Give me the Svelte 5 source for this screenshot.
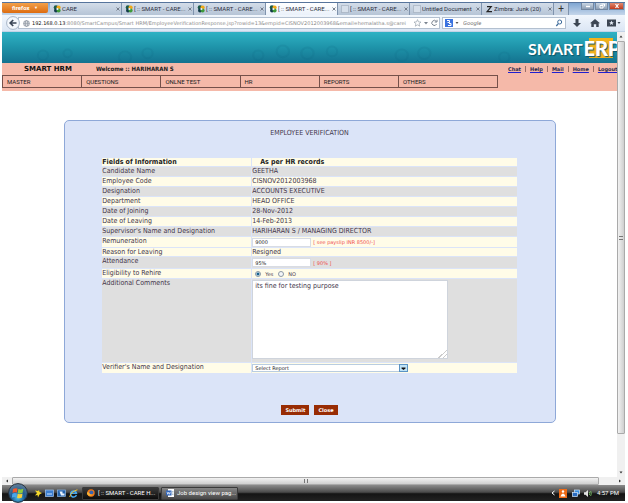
<script>
  const tabs = [
    { title: 'CARE', icon: 'care' },
    { title: '[ :: SMART - CARE...', icon: 'care' },
    { title: '[ :: SMART - CARE...', icon: 'care' },
    { title: '[ :: SMART - CARE...', icon: 'care', active: true },
    { title: '[ :: SMART - CARE...', icon: 'blank' },
    { title: 'Untitled Document', icon: 'blank' },
    { title: 'Zimbra: Junk (20)', icon: 'zimbra' }
  ];
  const menu = ['MASTER', 'QUESTIONS', 'ONLNE TEST', 'HR', 'REPORTS', 'OTHERS'];
  const links = ['Chat', 'Help', 'Mail', 'Home', 'Logout'];
  const records = [
    ['Candidate Name', 'GEETHA'],
    ['Employee Code', 'CISNOV2012003968'],
    ['Designation', 'ACCOUNTS EXECUTIVE'],
    ['Department', 'HEAD OFFICE'],
    ['Date of Joining', '28-Nov-2012'],
    ['Date of Leaving', '14-Feb-2013'],
    ["Supervisor's Name and Designation", 'HARIHARAN S / MANAGING DIRECTOR']
  ];
  let remuneration = $state('9000');
  let attendance = $state('95%');
  let rehire = $state('yes');
  let comments = $state('its fine for testing purpose');
</script>

<div class="screen">
  <header class="tabbar">
    <button class="firefox">firefox <span>▼</span></button>
    <div class="tabs">
      {#each tabs as tab}
        <div class="tab" class:active={tab.active}>
          {#if tab.icon === 'care'}
            <svg width="8" height="8" viewBox="0 0 8 8">
              <circle cx="3" cy="2.6" r="2.3" fill="#1c5a49" />
              <circle cx="5.6" cy="2.6" r="2.1" fill="#f0a818" />
              <circle cx="3" cy="5.6" r="2" fill="#123a4a" />
              <circle cx="5.6" cy="5.4" r="2" fill="#3f9a3c" />
              <circle cx="4.4" cy="4" r="1.1" fill="#eef4fa" />
            </svg>
          {:else if tab.icon === 'blank'}
            <svg width="8" height="8" viewBox="0 0 8 8">
              <rect x=".5" y=".5" width="7" height="7" fill="#d6dfea" stroke="#94a0b0" stroke-dasharray="1 1" />
            </svg>
          {:else}
            <svg width="8" height="8" viewBox="0 0 8 8">
              <path d="M2 1h5.5L3.4 6H7v1.3H.8L5 2.3H2z" fill="#222" />
            </svg>
          {/if}
          <span class="title">{tab.title}</span>
          <button class="x" aria-label="Close tab"><svg width="4" height="4" viewBox="0 0 4 4"><path d="M.5 .5l3 3M3.500 .5l-3 3" stroke="currentColor" stroke-width=".9" /></svg></button>
        </div>
      {/each}
      <button class="plus" aria-label="New tab">+</button>
    </div>
    <div class="winctl">
      <button aria-label="Minimize"><svg width="8" height="6" viewBox="0 0 8 6"><path d="M2 3.5h4" stroke="#fff" stroke-width="1.4" /></svg></button>
      <button aria-label="Restore"><svg width="8" height="6" viewBox="0 0 8 6"><path d="M3.5 1h3v2.500M2 2.500h3v2.500H2z" fill="none" stroke="#fff" /></svg></button>
      <button class="quit" aria-label="Close"><svg width="8" height="6" viewBox="0 0 8 6"><path d="M2.500 1l3 4M5.500 1l-3 4" stroke="#fff" stroke-width="1.2" /></svg></button>
    </div>
  </header>

  <div class="toolbar">
    <button class="back" aria-label="Back">
      <svg width="14" height="14" viewBox="0 0 14 14">
        <circle cx="7" cy="7" r="6.4" fill="#f4f8fd" stroke="#a8b6c8" />
        <path d="M10.500 7H4.500M7.200 4L4.200 7l3 3" fill="none" stroke="#3b4656" stroke-width="1.700" />
      </svg>
    </button>
    <div class="address">
      <svg width="7" height="7" viewBox="0 0 8 8"><g fill="none" stroke="#8b949f" stroke-width=".8"><circle cx="4" cy="4" r="3.400" /><ellipse cx="4" cy="4" rx="1.500" ry="3.400" /><path d="M.6 4h6.800M1 2.300h6M1 5.700h6" /></g></svg>
      <span class="url"><b>192.168.0.13</b>:8080/SmartCampus/Smart HRM/EmployeeVerificationResponse.jsp?rowid=13&amp;empid=CISNOV2012003968&amp;email=hemalatha.s@carei</span>
      <svg width="26" height="8" viewBox="0 0 26 8">
        <path d="M4.500 .6l1 2.300 2.500.2-1.900 1.600.6 2.500-2.200-1.400-2.200 1.400.6-2.500L1 3.100l2.500-.2z" fill="#fff" stroke="#9aa3ad" stroke-width=".7" />
        <path d="M11 3h4l-2 2.500z" fill="#7b8490" />
        <path d="M23.300 2.400A2.500 2.500 0 1 0 23.600 5M24 .8V3h-2.300" fill="none" stroke="#7b8490" />
      </svg>
    </div>
    <label class="search">
      <svg width="8" height="8" viewBox="0 0 8 8"><rect width="8" height="8" fill="#3b73e0" /><path d="M2 1.500h2.500v2H2.500M4 4.500h2v2H3" fill="none" stroke="#fff" /></svg>
      <svg width="4" height="8" viewBox="0 0 4 8"><path d="M.5 3h3L2 5z" fill="#555" /></svg>
      <input placeholder="Google" aria-label="Search Google" />
      <svg width="8" height="8" viewBox="0 0 8 8"><circle cx="4.700" cy="3" r="2" fill="none" stroke="#3f6c9c" /><path d="M3.300 4.600L1.300 7" stroke="#3f6c9c" stroke-width="1.300" /></svg>
    </label>
    <svg class="tools" width="50" height="10" viewBox="0 0 50 10">
      <g fill="#3c4653">
        <path d="M4.500 1h3v4H10L6 9 2 5h2.500z" />
        <path d="M24 1l5 4.300h-1.300V9h-2.500V6.200h-2.400V9h-2.500V5.300H19z" />
        <path d="M36 1.500h9v7h-9zM40.500 2.600l-.7 1.600-1.700.1 1.300 1-.4 1.700 1.500-.9 1.500.9-.4-1.700 1.300-1-1.700-.1z" fill-rule="evenodd" />
        <path d="M46.500 4h3L48 6z" />
      </g>
    </svg>
  </div>

  <div class="viewport">
    <main class="page">
      <div class="banner">
        <svg width="100%" height="100%" preserveAspectRatio="none" viewBox="0 0 600 32">
          <g fill="none" stroke="#0c6580" stroke-opacity=".14" stroke-width="2">
            <circle cx="40" cy="24" r="5" /><circle cx="64" cy="22" r="4" /><circle cx="120" cy="26" r="6" /><circle cx="142" cy="22" r="5" />
            <circle cx="250" cy="24" r="5" /><circle cx="274" cy="20" r="6" /><circle cx="298" cy="22" r="6" /><circle cx="322" cy="20" r="5" /><circle cx="390" cy="24" r="6" /><circle cx="412" cy="22" r="6" /><circle cx="490" cy="26" r="5" />
          </g>
        </svg>
        <div class="logo"><span class="smart">SMART</span><span class="erp">ERP</span></div>
      </div>
      <div class="menuband">
        <div class="userline">
          <strong class="app">SMART HRM</strong>
          <strong class="welcome">Welcome :: HARIHARAN S</strong>
          <nav class="links">
            {#each links as link, i}
              {#if i > 0}<i></i>{/if}
              <a href="#{link.toLowerCase()}">{link}</a>
            {/each}
          </nav>
        </div>
        <nav class="menu">
          {#each menu as item}<a href="#{item.toLowerCase()}">{item}</a>{/each}
        </nav>
      </div>

      <form class="panel" onsubmit={(e) => e.preventDefault()}>
        <h1>EMPLOYEE VERIFICATION</h1>
        <table>
          <thead>
            <tr class="cream"><th>Fields of Information</th><th class="second">As per HR records</th></tr>
          </thead>
          <tbody>
            {#each records as [name, value], i}
              <tr class:cream={i % 2 === 1}><td>{name}</td><td>{value}</td></tr>
            {/each}
            <tr class="cream">
              <td><label for="remuneration">Remuneration</label></td>
              <td><div class="field"><input id="remuneration" type="text" bind:value={remuneration} /><span class="hint">[ see payslip INR 8500/-]</span></div></td>
            </tr>
            <tr class="cream short"><td>Reason for Leaving</td><td>Resigned</td></tr>
            <tr>
              <td><label for="attendance">Attendance</label></td>
              <td><div class="field tall"><input id="attendance" type="text" bind:value={attendance} /><span class="hint">[ 90% ]</span></div></td>
            </tr>
            <tr class="cream">
              <td>Eligibility to Rehire</td>
              <td>
                <div class="radios">
                  <label><input type="radio" name="rehire" value="yes" bind:group={rehire} />Yes</label>
                  <label><input type="radio" name="rehire" value="no" bind:group={rehire} />NO</label>
                </div>
              </td>
            </tr>
            <tr>
              <td><label for="comments">Additional Comments</label></td>
              <td><textarea id="comments" bind:value={comments}></textarea></td>
            </tr>
            <tr class="cream">
              <td><label for="verifier">Verifier's Name and Designation</label></td>
              <td>
                <div class="pick">
                  <select id="verifier"><option>Select Report</option></select>
                  <svg width="9" height="8" viewBox="0 0 9 8"><rect x=".5" y=".5" width="8" height="7" fill="#bfe3f6" stroke="#5a93c4" /><path d="M2.500 3.500h4v1L4.500 6l-2-1.500z" fill="#111" /></svg>
                </div>
              </td>
            </tr>
          </tbody>
        </table>
        <div class="actions">
          <button type="submit">Submit</button>
          <button type="button">Close</button>
        </div>
      </form>
    </main>
    <div class="vscroll">
      <svg width="8" height="9" viewBox="0 0 8 9"><path d="M2.500 5.500h3L4 3.500z" fill="#333" /></svg>
      <div class="vthumb"><span></span></div>
      <svg width="8" height="9" viewBox="0 0 8 9"><path d="M2.500 3.500h3L4 5.500z" fill="#333" /></svg>
    </div>
  </div>

  <div class="hscroll">
    <svg width="10" height="8" viewBox="0 0 10 8"><path d="M6 2.500v3L4 4z" fill="#333" /></svg>
    <div class="hthumb"><span></span></div>
    <svg width="10" height="8" viewBox="0 0 10 8"><path d="M4 2.500v3L6 4z" fill="#333" /></svg>
  </div>

  <footer class="taskbar">
    <button class="orb" aria-label="Start">
      <svg width="20" height="20" viewBox="0 0 20 20">
        <defs><radialGradient id="orb" cx=".5" cy=".75" r=".7"><stop offset="0" stop-color="#4fc0e8" /><stop offset=".5" stop-color="#1d5b92" /><stop offset="1" stop-color="#5f7c96" /></radialGradient></defs>
        <circle cx="10" cy="10" r="9.400" fill="url(#orb)" stroke="#25313f" />
        <path d="M5 6q2.500-1.500 4.500-.4L9 9.600q-2-1-4.500.3z" fill="#f0582a" />
        <path d="M10.300 6q2.500 1 5-.3l-.7 4q-2.500 1.300-4.800.2z" fill="#8fca3c" />
        <path d="M4.300 10.700q2.500-1.300 4.600-.2l-.6 4q-2-1-4.500.2z" fill="#4aa5ea" />
        <path d="M9.700 10.800q2.500 1 4.800-.2l-.6 4q-2.500 1.200-4.800.1z" fill="#fbd035" />
      </svg>
    </button>
    <div class="quick">
      <svg width="8" height="9" viewBox="0 0 8 9"><path d="M1 1.500l3 .5 1-1 .5 2L8 4 5.500 5.500 4 8.500 3.500 6 1 6.500 3 4z" fill="#f5d82c" /></svg>
      <svg width="9" height="9" viewBox="0 0 9 9"><rect x=".5" y="1" width="8" height="6.500" fill="#3c7ed0" stroke="#a8c8ee" stroke-width=".7" /><path d="M2 5h5" stroke="#cfe4fb" /></svg>
      <svg width="9" height="9" viewBox="0 0 9 9"><rect x=".5" y="1" width="8" height="6.500" fill="#2463ae" stroke="#8fb8e4" stroke-width=".7" /><path d="M2.500 2.500h3v2h2v2H4z" fill="#eaf3fd" /></svg>
      <svg width="9" height="9" viewBox="0 0 9 9"><path d="M7.400 6A3 3 0 1 1 7.500 4.300H2.500" fill="none" stroke="#49a9ee" stroke-width="1.500" /><path d="M.7 8Q2 2.500 8.400.8" fill="none" stroke="#f1c232" /></svg>
    </div>
    <button class="task current">
      <svg width="8" height="8" viewBox="0 0 8 8"><circle cx="4" cy="4" r="3.700" fill="#f07818" /><circle cx="4.400" cy="3.500" r="2" fill="#3864b4" /><path d="M.5 3q1.500.2 2 1.500t3 .9q-1.500 2.300-4 1T.5 3z" fill="#f9b233" /></svg>
      <span>[ :: SMART - CARE H...</span>
    </button>
    <button class="task">
      <svg width="8" height="8" viewBox="0 0 8 8"><rect x="2" width="6" height="8" fill="#fff" /><rect y="1.500" width="5.500" height="5" fill="#2c62b8" /><path d="M1 2.800l.8 2.500.9-2 .9 2 .8-2.500" fill="none" stroke="#fff" stroke-width=".7" /><path d="M6 2.500h1.500M6 4h1.500M6 5.500h1.500" stroke="#79a" stroke-width=".6" /></svg>
      <span>Job design view pag...</span>
    </button>
    <div class="tray">
      <svg width="4" height="8" viewBox="0 0 4 8"><path d="M3.500 2L1 4l2.500 2" fill="none" stroke="#fff" /></svg>
      <svg width="8" height="9" viewBox="0 0 8 9"><rect width="8" height="9" fill="#ee6a16" /><circle cx="4" cy="2.500" r="1.200" fill="#fff" /><path d="M1.500 7.500q1-3 2.500-3t2.500 3z" fill="#fff" /></svg>
      <svg class="net" width="8" height="9" viewBox="0 0 8 9"><rect x="2.500" y="1" width="5" height="4" fill="#3b8fe0" stroke="#d5e8fb" stroke-width=".7" /><rect x=".5" y="3.500" width="5" height="4" fill="#2b6cc0" stroke="#d5e8fb" stroke-width=".7" /></svg>
      <svg width="8" height="9" viewBox="0 0 8 9"><path d="M0 3.200h1.500L4 1v7L1.500 5.800H0z" fill="#e4e4e4" /><path d="M5.300 3q1 1.500 0 3M6.600 2q1.500 2.500 0 5" fill="none" stroke="#7fcf6a" stroke-width=".8" /></svg>
      <time>4:57 PM</time>
    </div>
  </footer>
</div>

<style>
  :global(body) { margin: 0; background: #fff; }
  * { box-sizing: border-box; }
  button, input, select, textarea { font: inherit; color: inherit; margin: 0; padding: 0; border: 0; border-radius: 0; background: none; }
  a { color: inherit; text-decoration: none; }
  svg { display: block; flex: none; }

  .screen { display: flex; flex-direction: column; min-height: 100vh; padding: 2px 3px 2px 2px; font: 6px/8px Roboto, "Open Sans", sans-serif; color: #333; overflow: hidden; }

  .tabbar { display: flex; height: 13px; background: linear-gradient(#7fa6d2, #c5d6ea); border-top: 1px solid #56749c; }
  .firefox { width: 46px; height: 10px; flex: none; background: linear-gradient(#f2a04a, #dd6c10); color: #fff; font-weight: 700; line-height: 8px; border-radius: 0 0 2px 2px; }
  .firefox span { font-size: 4px; margin-left: 3px; vertical-align: top; }
  .tabs { display: flex; flex: 1; margin-left: 2px; min-width: 0; }
  .tab { display: flex; align-items: center; flex: 0 1 72px; min-width: 0; padding: 0 1px 0 3px; gap: 1px; background: linear-gradient(#d3dde9, #b5c4d6); border-right: 1px solid #7f93ad; }
  .tab.active { background: linear-gradient(#fff, #eaf1fa); }
  .title { flex: 1; min-width: 0; white-space: nowrap; overflow: hidden; color: #2c2f40; }
  .x { flex: none; color: #6a7280; }
  .plus { width: 15px; flex: none; font-size: 10px; line-height: 10px; color: #333; background: #c3d0e0; border-right: 1px solid #7f93ad; }
  .winctl { display: flex; gap: 1px; align-items: flex-start; padding-right: 1px; }
  .winctl button { display: grid; place-items: center; width: 13px; height: 7px; background: linear-gradient(#c9d6e4, #8d9fb5); border: 1px solid #7487a0; border-top: 0; }
  .winctl .quit { width: 15px; background: linear-gradient(#e08a72, #c23a1c); }

  .toolbar { display: flex; align-items: center; height: 17px; padding: 0 4px; background: linear-gradient(#f1f6fc, #dbe6f4); border-bottom: 1px solid #c3d3e6; }
  .back { flex: none; z-index: 1; }
  .address, .search { display: flex; align-items: center; height: 12px; background: #fff; border: 1px solid #b3c0d0; }
  .address { flex: 1; min-width: 0; gap: 2px; margin-left: -2px; padding-left: 4px; }
  .url { flex: 1; min-width: 0; overflow: hidden; white-space: nowrap; color: #8c8c8c; font-family: "DejaVu Sans", Verdana, sans-serif; font-size: 5px; }
  .url b { font-weight: 400; color: #111; }
  .search { width: 124px; flex: none; margin-left: 2px; padding: 0 2px; gap: 2px; }
  .search input { flex: 1; min-width: 0; outline: 0; font-style: italic; padding-left: 2px; }
  .search input::placeholder { color: #777; opacity: 1; }
  .tools { margin-left: 5px; }

  .viewport { display: flex; flex: 1; min-height: 0; }
  .page { flex: 1; min-width: 0; overflow: hidden; background: #fff; font-family: "DejaVu Sans", Verdana, sans-serif; }
  .banner { display: grid; height: 31px; overflow: hidden; background: linear-gradient(#2fb2c4, #1e93a9 50%, #14728f); }
  .banner > * { grid-area: 1 / 1; min-width: 0; }
  .logo { justify-self: end; display: flex; align-items: flex-end; width: 89px; height: 26px; overflow: hidden; color: #fff; font-family: Lato, "Open Sans", sans-serif; text-shadow: 1px 1px 1px #0b5468; }
  .smart { font-size: 16px; line-height: 18px; font-weight: 700; }
  .erp { font-size: 20px; line-height: 20px; font-weight: 900; margin-left: 1px; background: linear-gradient(90deg, transparent 5px, #f2b21c 5px 29px, transparent 29px); }

  .menuband { height: 28px; background: #f5b9a9; color: #3a2a2a; }
  .userline { display: flex; align-items: center; height: 12px; font-weight: 700; }
  .app { font-size: 7px; color: #111; margin-left: 22px; width: 72px; }
  .welcome { font-family: "DejaVu Sans Condensed", Tahoma, sans-serif; color: #222; }
  .links { display: flex; align-items: center; gap: 4px; width: 109px; margin-left: auto; overflow: hidden; font-size: 5px; }
  .links a { color: #2a2a4a; text-decoration: underline; text-decoration-color: #2020d0; }
  .links i { width: 1px; height: 6px; background: #9a6e66; flex: none; }
  .menu { display: grid; grid-template-columns: repeat(5, 16fr) 20fr; width: 496px; max-width: 100%; height: 13px; border: 1px solid #75504a; border-left: 0; font: 6px/11px Roboto, Arial, sans-serif; color: #222; }
  .menu a { border-left: 1px solid #75504a; padding-left: 4px; }

  .panel { width: 80%; margin: 29px auto 0; padding: 8px 0 7px; background: #dbe4f8; border: 1px solid #8ea8d8; border-radius: 5px; color: #43354a; font: 7px/8px "DejaVu Sans Condensed", Tahoma, sans-serif; }
  h1 { margin: 0; font-size: 7px; line-height: 8px; font-weight: 400; text-align: center; }
  table { width: 85%; margin: 20px auto 0; table-layout: fixed; border-spacing: 1px; }
  th, td { padding: 0; height: 9px; line-height: 8px; vertical-align: top; text-align: left; background: #dfdfdf; white-space: nowrap; }
  th:first-child { width: 149px; }
  .cream > * { background: #fffce8; }
  th, .short td { height: 8px; }
  th { color: #222; }
  th.second { padding-left: 8px; }
  td label { display: block; }
  .field, .radios, .pick, .actions { font-family: "DejaVu Sans", Verdana, sans-serif; font-size: 5px; }
  .field { display: flex; align-items: center; gap: 2px; height: 10px; }
  .field.tall { height: 11px; }
  .field input { width: 59px; height: 9px; padding-left: 2px; background: #fff; border: 1px solid #d8dce4; color: #222; outline: 0; }
  .hint { color: #f04a4a; }
  .radios { display: flex; gap: 5px; height: 9px; padding-left: 3px; }
  .radios label { display: flex; align-items: center; gap: 4px; }
  .radios input { appearance: none; width: 6px; height: 6px; border: 1px solid #8c99a6; border-radius: 50%; background: #f4f6f8; }
  .radios input:checked { background: radial-gradient(#17618e 45%, #cfe6f2 60%); }
  textarea { display: block; width: 196px; height: 79px; margin: 1px 0 3px; padding: 1px 2px; background: #fff; border: 1px solid #cfd4dc; resize: both; outline: 0; }
  textarea::-webkit-resizer { background: linear-gradient(135deg, transparent 70%, #ccc 70% 76%, transparent 76% 84%, #ccc 84% 90%, transparent 90%); }
  .pick { display: grid; align-items: center; width: 156px; height: 10px; }
  .pick > * { grid-area: 1 / 1; }
  .pick select { appearance: none; height: 8px; padding-left: 2px; background: #fff; border: 1px solid #b9cde0; line-height: 6px; color: #222; }
  .pick svg { justify-self: end; pointer-events: none; }
  .actions { display: flex; justify-content: center; gap: 5px; margin-top: 31px; }
  .actions button { height: 10px; padding: 0 4px; background: #982c04; color: #fff; line-height: 10px; font-weight: 700; }

  .vscroll { display: flex; flex-direction: column; width: 8px; background: #f0f0f0; }
  .vthumb { flex: 1; display: grid; place-items: center; margin-bottom: 34px; background: linear-gradient(90deg, #f2f2f2, #cfcfcf); border: 1px solid #aaa; border-radius: 1px; }
  .vthumb span { width: 4px; height: 4px; border: 1px solid #777; border-width: 1px 0; }
  .hscroll { display: flex; height: 8px; background: #f0f0f0; }
  .hthumb { flex: 1; display: grid; place-items: center; margin-right: 16px; background: linear-gradient(#f2f2f2, #cfcfcf); border: 1px solid #aaa; border-radius: 1px; }
  .hthumb span { width: 4px; height: 4px; border: 1px solid #777; border-width: 0 1px; }

  .taskbar { display: flex; align-items: center; height: 16px; padding: 0 6px; background: linear-gradient(#8c8c8c, #4a4a4a 45%, #141414 55%, #222); color: #fff; }
  .orb { flex: none; }
  .quick { display: flex; gap: 3px; margin: 0 4px 0 6px; }
  .task { display: flex; align-items: center; gap: 3px; width: 77px; height: 13px; margin-right: 2px; padding-left: 4px; overflow: hidden; white-space: nowrap; background: linear-gradient(#858585, #484848); border: 1px solid #3a3a3a; border-radius: 1px; }
  .task.current { background: linear-gradient(#3a3a3a, #0c0c0c); }
  .tray { display: flex; align-items: center; gap: 4px; margin-left: auto; }
  .tray time { margin-left: 1px; }
  .net { margin-left: 1px; }
</style>
